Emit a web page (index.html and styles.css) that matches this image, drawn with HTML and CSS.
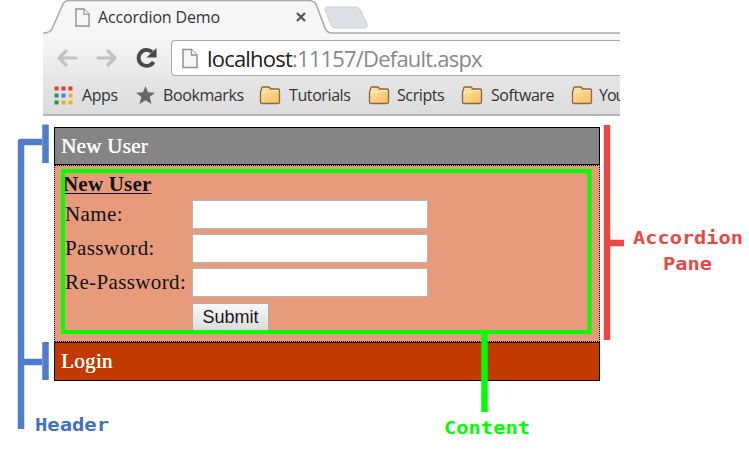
FILE: index.html
```html
<!DOCTYPE html>
<html lang="en">
<head>
<meta charset="utf-8">
<title>Accordion Demo</title>
<link rel="stylesheet" href="styles.css">
</head>
<body>
<svg class="symbols" width="0" height="0">
  <defs>
    <linearGradient id="gold" x1="0" y1="0" x2="1" y2="1"><stop offset="0" stop-color="#ffe6aa"/><stop offset="1" stop-color="#f5bd5f"/></linearGradient>
    <symbol id="folder" viewBox="0 0 22 19"><path d="M1.5 16V5.500L2.500 4V2.500Q2.500 1 4 1H9.500Q11 1 11.500 3H19Q20.500 3 20.500 4.500V16Q20.500 17.500 19 17.500H3Q1.500 17.500 1.500 16Z" fill="url(#gold)" stroke="#8d653f" stroke-width="1.300"/><path d="M3 6H10.500L12.500 4.500H19" fill="none" stroke="#fff0c8"/></symbol>
    <symbol id="page" viewBox="0 0 16 20"><path d="M1 1H9.500L15 6.500V19H1Z" fill="#f6f6f6" stroke="#929292" stroke-width="1.500"/><path d="M9.500 1V6.500H15" fill="#fff" stroke="#929292" stroke-width="1.300"/></symbol>
  </defs>
</svg>
<main class="browser">
  <header class="tabs">
    <svg class="tab-shape" width="577" height="34" viewBox="0 0 577 34">
      <path d="M0 34V33Q7 33 9 29L20 4Q22 .5 26 .5H265Q271 .5 273 4L282 28Q284 33 289 33H577V34Z" fill="#f6f6f6"/>
      <path d="M0 33Q7 33 9 29L20 4Q22 .5 26 .5H265Q271 .5 273 4L282 28Q284 33 289 33H577" fill="none" stroke="#aaa" stroke-width="1.600"/>
      <path d="M284 7H313Q316 7 317 9L324 24Q325 28 322 28H293Q289 28 288 25L282 10Q281 7 284 7Z" fill="#dedfe5" stroke="#cfd0d6"/>
    </svg>
    <div class="tab">
      <svg width="15" height="19"><use href="#page"/></svg>
      <span class="tab-title">Accordion Demo</span>
      <svg class="close" width="10" height="10" viewBox="0 0 10 10"><path d="M1 1L9 9M9 1L1 9" stroke="#555" stroke-width="2.200"/></svg>
    </div>
  </header>
  <nav class="toolbar">
    <svg class="nav-icons" width="118" height="42" viewBox="0 0 118 42">
      <g fill="none" stroke="#c2c2c2" stroke-width="3.200" stroke-linecap="round" stroke-linejoin="round"><path d="M33 24H16M23 17L16 24L23 31M55 24H72M65 17L72 24L65 31"/></g>
      <path d="M109 18A8 8 0 1 0 110.500 28" fill="none" stroke="#494949" stroke-width="3.800"/><path d="M113.500 14V23.500H103.500Z" fill="#494949"/>
    </svg>
    <div class="address"><svg width="16" height="21"><use href="#page"/></svg><span class="url">localhost<span class="path">:11157/Default.aspx</span></span></div>
  </nav>
  <nav class="bookmarks">
    <svg class="apps" width="19" height="19" viewBox="0 0 19 19"><path d="M.5 .5h4v4h-4zM7.500 .5h4v4h-4zM14.500 .5h4v4h-4z" fill="#e33b2c"/><path d="M.5 7.500h4v4h-4zM.5 14.500h4v4h-4z" fill="#239451"/><path d="M7.500 7.500h4v4h-4z" fill="#3e83ef"/><path d="M14.500 7.500h4v4h-4zM7.500 14.500h4v4h-4zM14.500 14.500h4v4h-4z" fill="#f5ad18"/></svg>
    <span class="label apps-label">Apps</span>
    <svg class="star" width="19" height="18" viewBox="0 0 19 18"><path d="M9.500 0L12 6.200L19 6.700L13.700 11L15.500 18L9.500 14.200L3.500 18L5.300 11L0 6.700L7 6.200Z" fill="#686868"/></svg>
    <span class="label bookmark-label">Bookmarks</span>
    <svg width="22" height="19"><use href="#folder"/></svg><span class="label tutorials">Tutorials</span>
    <svg width="22" height="19"><use href="#folder"/></svg><span class="label scripts">Scripts</span>
    <svg width="22" height="19"><use href="#folder"/></svg><span class="label software">Software</span>
    <svg width="22" height="19"><use href="#folder"/></svg><span class="label you">You</span>
  </nav>
  <section class="accordion">
    <h2 class="pane-header selected">New User</h2>
    <form class="pane-content">
      <div class="form-title">New User</div>
      <label class="row"><span>Name:</span><input type="text"></label>
      <label class="row"><span>Password:</span><input type="password"></label>
      <label class="row"><span>Re-Password:</span><input type="password"></label>
      <div class="row"><span></span><button type="button">Submit</button></div>
    </form>
    <h2 class="pane-header login">Login</h2>
  </section>
</main>
<svg class="callouts" width="749" height="454" viewBox="0 0 749 454">
  <g fill="none" stroke="#4f7ccf" stroke-width="6.500"><path d="M45.500 124.500V163M45.500 342V380M42 142H21V429M21 362H42" stroke-linejoin="round"/></g>
  <path d="M607 125V340M607 243H624" fill="none" stroke="#e94943" stroke-width="6.500"/>
  <path d="M63 171H589.500V332H63Z" fill="none" stroke="#0f0" stroke-width="4"/><path d="M484.500 333V412" stroke="#0f0" stroke-width="6.500"/>
  <g class="callout-text"><text x="35" y="431" textLength="74" lengthAdjust="spacingAndGlyphs" fill="#3f6fc8">Header</text><text x="444" y="433.500" textLength="86" lengthAdjust="spacingAndGlyphs" fill="#0f0">Content</text><text x="633" y="244" textLength="110" lengthAdjust="spacingAndGlyphs" fill="#e94943">Accordion</text><text x="663" y="270" textLength="49" lengthAdjust="spacingAndGlyphs" fill="#e94943">Pane</text></g>
</svg>
</body>
</html>
```
FILE: styles.css
```css
* { box-sizing: border-box; }
body { margin: 0; width: 749px; height: 454px; overflow: hidden; position: relative; background: #fff; }
svg { flex: none; display: block; }
.symbols, .callouts, .tab-shape { position: absolute; left: 0; top: 0; }
.browser { width: 577px; margin-left: 43px; font-family: "Open Sans", sans-serif; }
.tabs { height: 34px; position: relative; }
.tab { display: flex; height: 34px; padding-left: 32px; align-items: center; position: relative; }
.tab-title { width: 197px; margin-left: 8px; font-size: 16px; letter-spacing: -.15px; white-space: nowrap; color: #333; }
.close { margin-left: 1px; }
.toolbar { height: 42px; padding-top: 6px; display: flex; background: linear-gradient(#f7f7f7, #e8e8e8); }
.nav-icons { margin-top: -6px; margin-right: 10px; }
.address { flex: 1; height: 36px; display: flex; align-items: center; padding-left: 10px; border: 1.5px solid #aaa; border-right: 0; border-radius: 4px 0 0 4px; background: #fff; }
.url { margin-left: 9px; font-size: 22px; letter-spacing: -.8px; line-height: 30px; color: #222; white-space: nowrap; }
.path { color: #898989; }
.bookmarks { height: 40px; padding-left: 11px; display: flex; align-items: center; overflow: hidden; background: linear-gradient(#e7e6e6, #dcdcdc); border-bottom: 2px solid #b5b5b5; }
.label { font-size: 16px; letter-spacing: -.4px; color: #333; white-space: nowrap; margin-left: 8px; flex: none; }
.apps-label { width: 47px; margin-left: 9px; }
.star { margin-left: 7px; }
.bookmark-label { width: 89px; }
.tutorials { width: 71px; }
.scripts { width: 56px; margin-left: 7px; }
.software { width: 72px; }
.you { margin-left: 6px; letter-spacing: -1px; }
.bookmark-label + svg { margin-left: 7px; }
.tutorials + svg, .scripts + svg, .software + svg { margin-left: 8px; }
.accordion { width: 546px; margin: 11px 0 0 11px; font-family: "Liberation Serif", serif; }
.pane-header { height: 39px; margin: 0; padding: 0 6px; border: 1.5px solid #000; color: #fff; font-size: 21px; line-height: 36px; letter-spacing: .3px; font-weight: 400; text-shadow: .4px 0 #fff; }
.selected { height: 38px; }
.selected { background: #858585; }
.login { background: #c23a00; }
.pane-content { height: 177px; padding: 6px 8px; border: 1.5px dotted #000; background: #e79b7b; color: #111; font-size: 21px; }
.form-title { height: 28px; line-height: 24px; font-weight: 700; letter-spacing: .2px; text-decoration: underline; text-decoration-thickness: 1px; text-underline-offset: 2px; }
.row { height: 34px; display: flex; }
.row span { width: 129px; padding-left: 2px; line-height: 29px; letter-spacing: .38px; white-space: nowrap; }
input { width: 236px; height: 29px; border: 1.5px solid #b3b5b8; padding: 2px; background: #fff; }
button { width: 77px; height: 28px; margin-top: 1px; padding: 0; border: 1px solid #aaa; background: linear-gradient(#f8f8f8, #dcdcdc); color: #171717; font: 18px "Liberation Sans", sans-serif; }
.callout-text { font: bold 18px "DejaVu Sans Mono", monospace; }
```
